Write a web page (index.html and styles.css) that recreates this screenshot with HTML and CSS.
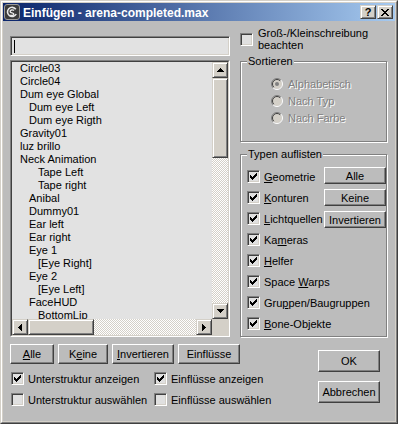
FILE: index.html
```html
<!DOCTYPE html>
<html lang="de">
<head>
  <meta charset="UTF-8">
  <title>Einfügen - arena-completed.max</title>
  <link rel="stylesheet" href="styles.css">
</head>
<body>
  <div class="window">
    <div class="frame">
      <div class="titlebar">
        <svg class="app-icon" width="16" height="16" viewBox="0 0 16 16">
          <rect x="0.5" y="0.5" width="15" height="15" rx="2.5" fill="#3b3b3b" stroke="#9a9a9a"/>
          <path d="M11.8 5.2A4.6 4.6 0 1 0 12.2 10" fill="none" stroke="#e8e8e8" stroke-width="1.6"/>
          <path d="M10 6.6C8.6 5.2 5.8 6 6.2 7.8 6.6 9.4 9.6 8.4 9.8 10.2 10 11.6 7.4 12 6.2 11" fill="none" stroke="#e8e8e8" stroke-width="1.4"/>
        </svg>
        <span class="title">Einfügen - arena-completed.max</span>
        <div class="caption-buttons">
          <span class="cap-btn help">?</span>
          <span class="cap-btn close">
            <svg width="8" height="7" viewBox="0 0 8 7"><path d="M0 0h2v1h1v1h2V1h1V0h2v1H7v1H6v1H5v1h1v1h1v1h1v1H6V6H5V5H3v1H2v1H0V6h1V5h1V4h1V3H2V2H1V1H0z"/></svg>
          </span>
        </div>
      </div>

      <div class="client">
        <div class="main">
          <div class="left">
            <div class="search"><span class="caret"></span></div>
            <div class="listbox">
              <div class="list-inner">
                <div class="list-view">
                  <ul class="items">
                    <li class="l0">Circle03</li>
                    <li class="l0">Circle04</li>
                    <li class="l0">Dum eye Global</li>
                    <li class="l1">Dum eye Left</li>
                    <li class="l1">Dum eye Rigth</li>
                    <li class="l0">Gravity01</li>
                    <li class="l0">luz brillo</li>
                    <li class="l0">Neck Animation</li>
                    <li class="l2">Tape Left</li>
                    <li class="l2">Tape right</li>
                    <li class="l1">Anibal</li>
                    <li class="l1">Dummy01</li>
                    <li class="l1">Ear left</li>
                    <li class="l1">Ear right</li>
                    <li class="l1">Eye 1</li>
                    <li class="l2">[Eye Right]</li>
                    <li class="l1">Eye 2</li>
                    <li class="l2">[Eye Left]</li>
                    <li class="l1">FaceHUD</li>
                    <li class="l2">BottomLip</li>
                  </ul>
                  <div class="vscroll">
                    <span class="sb-btn"><svg width="7" height="4" viewBox="0 0 7 4"><path d="M3 0h1v1h1v1h1v1h1v1H0V3h1V2h1V1h1z"/></svg></span>
                    <span class="sb-thumb v"></span>
                    <span class="sb-track"></span>
                    <span class="sb-btn"><svg width="7" height="4" viewBox="0 0 7 4"><path d="M0 0h7v1H6v1H5v1H4v1H3V3H2V2H1V1H0z"/></svg></span>
                  </div>
                </div>
                <div class="hscroll-row">
                  <div class="hscroll">
                    <span class="sb-btn"><svg width="4" height="7" viewBox="0 0 4 7"><path d="M0 3h1V2h1V1h1V0h1v7H3V6H2V5H1V4H0z"/></svg></span>
                    <span class="sb-thumb h"></span>
                    <span class="sb-track"></span>
                    <span class="sb-btn"><svg width="4" height="7" viewBox="0 0 4 7"><path d="M0 0h1v1h1v1h1v1h1v1H3v1H2v1H1v1H0z"/></svg></span>
                  </div>
                  <span class="sb-corner"></span>
                </div>
              </div>
            </div>
          </div>

          <div class="right">
            <label class="check case">
              <span class="box"></span>
              <span class="case-text">Groß-/Kleinschreibung beachten</span>
            </label>

            <fieldset class="group sort">
              <legend>Sortieren</legend>
              <div class="radio">
                <svg width="12" height="12" viewBox="0 0 12 12"><circle cx="6" cy="6" r="5" fill="#d4d0c8"/><path d="M2.1 9.9A5.5 5.5 0 0 1 9.9 2.1" fill="none" stroke="#808080"/><path d="M9.9 2.1A5.5 5.5 0 0 1 2.1 9.9" fill="none" stroke="#fff"/><path d="M2.8 9.2A4.5 4.5 0 0 1 9.2 2.8" fill="none" stroke="#404040"/><circle cx="6" cy="6" r="2" fill="#808080"/></svg>
                <span>Alphabetisch</span>
              </div>
              <div class="radio">
                <svg width="12" height="12" viewBox="0 0 12 12"><circle cx="6" cy="6" r="5" fill="#d4d0c8"/><path d="M2.1 9.9A5.5 5.5 0 0 1 9.9 2.1" fill="none" stroke="#808080"/><path d="M9.9 2.1A5.5 5.5 0 0 1 2.1 9.9" fill="none" stroke="#fff"/><path d="M2.8 9.2A4.5 4.5 0 0 1 9.2 2.8" fill="none" stroke="#404040"/></svg>
                <span>Nach Typ</span>
              </div>
              <div class="radio">
                <svg width="12" height="12" viewBox="0 0 12 12"><circle cx="6" cy="6" r="5" fill="#d4d0c8"/><path d="M2.1 9.9A5.5 5.5 0 0 1 9.9 2.1" fill="none" stroke="#808080"/><path d="M9.9 2.1A5.5 5.5 0 0 1 2.1 9.9" fill="none" stroke="#fff"/><path d="M2.8 9.2A4.5 4.5 0 0 1 9.2 2.8" fill="none" stroke="#404040"/></svg>
                <span>Nach Farbe</span>
              </div>
            </fieldset>

            <fieldset class="group types">
              <legend>Typen auflisten</legend>
              <div class="types-body">
                <div class="type-list">
                  <label class="check row"><span class="box on"><svg width="7" height="7" viewBox="0 0 7 7"><path d="M0 2h1v3H0zM1 3h1v3H1zM2 4h1v3H2zM3 3h1v3H3zM4 2h1v3H4zM5 1h1v3H5zM6 0h1v3H6z"/></svg></span><span><u>G</u>eometrie</span></label>
                  <label class="check row"><span class="box on"><svg width="7" height="7" viewBox="0 0 7 7"><path d="M0 2h1v3H0zM1 3h1v3H1zM2 4h1v3H2zM3 3h1v3H3zM4 2h1v3H4zM5 1h1v3H5zM6 0h1v3H6z"/></svg></span><span><u>K</u>onturen</span></label>
                  <label class="check row"><span class="box on"><svg width="7" height="7" viewBox="0 0 7 7"><path d="M0 2h1v3H0zM1 3h1v3H1zM2 4h1v3H2zM3 3h1v3H3zM4 2h1v3H4zM5 1h1v3H5zM6 0h1v3H6z"/></svg></span><span><u>L</u>ichtquellen</span></label>
                  <label class="check row"><span class="box on"><svg width="7" height="7" viewBox="0 0 7 7"><path d="M0 2h1v3H0zM1 3h1v3H1zM2 4h1v3H2zM3 3h1v3H3zM4 2h1v3H4zM5 1h1v3H5zM6 0h1v3H6z"/></svg></span><span>Ka<u>m</u>eras</span></label>
                  <label class="check row"><span class="box on"><svg width="7" height="7" viewBox="0 0 7 7"><path d="M0 2h1v3H0zM1 3h1v3H1zM2 4h1v3H2zM3 3h1v3H3zM4 2h1v3H4zM5 1h1v3H5zM6 0h1v3H6z"/></svg></span><span><u>H</u>elfer</span></label>
                  <label class="check row"><span class="box on"><svg width="7" height="7" viewBox="0 0 7 7"><path d="M0 2h1v3H0zM1 3h1v3H1zM2 4h1v3H2zM3 3h1v3H3zM4 2h1v3H4zM5 1h1v3H5zM6 0h1v3H6z"/></svg></span><span>Space <u>W</u>arps</span></label>
                  <label class="check row"><span class="box on"><svg width="7" height="7" viewBox="0 0 7 7"><path d="M0 2h1v3H0zM1 3h1v3H1zM2 4h1v3H2zM3 3h1v3H3zM4 2h1v3H4zM5 1h1v3H5zM6 0h1v3H6z"/></svg></span><span>Gru<u>p</u>pen/Baugruppen</span></label>
                  <label class="check row"><span class="box on"><svg width="7" height="7" viewBox="0 0 7 7"><path d="M0 2h1v3H0zM1 3h1v3H1zM2 4h1v3H2zM3 3h1v3H3zM4 2h1v3H4zM5 1h1v3H5zM6 0h1v3H6z"/></svg></span><span><u>B</u>one-Objekte</span></label>
                </div>
                <div class="type-buttons">
                  <button class="btn small">Alle</button>
                  <button class="btn small">Keine</button>
                  <button class="btn small">Invertieren</button>
                </div>
              </div>
            </fieldset>
          </div>
        </div>

        <div class="bottom">
          <div class="bottom-left">
            <div class="btn-row">
              <button class="btn w44"><u>A</u>lle</button>
              <button class="btn w50">K<u>e</u>ine</button>
              <button class="btn w62"><u>I</u>nvertieren</button>
              <button class="btn w62">Einflüsse</button>
            </div>
            <div class="check-grid">
              <label class="check row"><span class="box on"><svg width="7" height="7" viewBox="0 0 7 7"><path d="M0 2h1v3H0zM1 3h1v3H1zM2 4h1v3H2zM3 3h1v3H3zM4 2h1v3H4zM5 1h1v3H5zM6 0h1v3H6z"/></svg></span><span>Unterstruktur anzeigen</span></label>
              <label class="check row"><span class="box on"><svg width="7" height="7" viewBox="0 0 7 7"><path d="M0 2h1v3H0zM1 3h1v3H1zM2 4h1v3H2zM3 3h1v3H3zM4 2h1v3H4zM5 1h1v3H5zM6 0h1v3H6z"/></svg></span><span>Einflüsse anzeigen</span></label>
              <label class="check row"><span class="box"></span><span>Unterstruktur auswählen</span></label>
              <label class="check row"><span class="box"></span><span>Einflüsse auswählen</span></label>
            </div>
          </div>
          <div class="bottom-right">
            <button class="btn big">OK</button>
            <button class="btn big">Abbrechen</button>
          </div>
        </div>
      </div>
    </div>
  </div>
</body>
</html>
```

FILE: styles.css
```css
* {
  box-sizing: border-box;
}

body {
  margin: 0;
  font-family: 'Liberation Sans', Arial, sans-serif;
  font-size: 11px;
  color: #000;
}

.window {
  width: 398px;
  height: 424px;
  border: 1px solid;
  border-color: #d4d0c8 #404040 #404040 #d4d0c8;
  background: #d4d0c8;
}

.frame {
  height: 100%;
  border: 1px solid;
  border-color: #fff #808080 #808080 #fff;
  padding: 1px;
  display: flex;
  flex-direction: column;
}

/* title bar */
.titlebar {
  height: 18px;
  flex: none;
  display: flex;
  align-items: center;
  background: linear-gradient(to right, #0a246a, #a6caf0);
  padding-left: 1px;
}

.app-icon {
  display: block;
}

.title {
  margin-left: 3px;
  color: #fff;
  font-weight: bold;
  font-size: 12px;
  line-height: 18px;
  padding-top: 1px;
  white-space: nowrap;
}

.caption-buttons {
  margin-left: auto;
  margin-right: 2px;
  display: flex;
  gap: 1px;
}

.cap-btn {
  width: 16px;
  height: 14px;
  display: flex;
  align-items: center;
  justify-content: center;
  background: #d4d0c8;
  border: 1px solid;
  border-color: #d4d0c8 #404040 #404040 #d4d0c8;
  box-shadow: inset 1px 1px #fff, inset -1px -1px #808080;
}

.cap-btn.help {
  font-weight: bold;
  font-size: 11px;
  line-height: 12px;
}

.cap-btn svg {
  display: block;
}

/* client area */
.client {
  flex: 1;
  background: #bcbcbc;
  padding: 6px 8px 0 7px;
  display: flex;
  flex-direction: column;
}

.main {
  display: flex;
  gap: 10px;
}

.left {
  width: 220px;
  flex: none;
  margin-top: 9px;
}

.right {
  width: 147px;
  flex: none;
  min-width: 0;
}

.search {
  height: 20px;
  margin-bottom: 4px;
  background: #e2e2e2;
  border: 1px solid;
  border-color: #808080 #fff #fff #808080;
  box-shadow: inset 1px 1px #404040, inset -1px -1px #d4d0c8;
  display: flex;
  align-items: center;
}

.caret {
  width: 1px;
  height: 13px;
  margin-left: 3px;
  background: #000;
}

/* list box */
.listbox {
  height: 277px;
  border: 1px solid;
  border-color: #808080 #fff #fff #808080;
}

.list-inner {
  height: 100%;
  border: 1px solid;
  border-color: #404040 #d4d0c8 #d4d0c8 #404040;
  background: #e2e2e2;
  display: flex;
  flex-direction: column;
}

.list-view {
  flex: 1;
  min-height: 0;
  display: flex;
  overflow: hidden;
}

.items {
  flex: 1;
  margin: 0;
  padding: 0;
  list-style: none;
  overflow: hidden;
}

.items li {
  height: 13px;
  line-height: 13px;
  white-space: nowrap;
}

.items .l0 { padding-left: 8px; }
.items .l1 { padding-left: 17px; }
.items .l2 { padding-left: 26px; }

.vscroll {
  width: 16px;
  display: flex;
  flex-direction: column;
}

.sb-btn,
.sb-thumb {
  flex: none;
  width: 16px;
  height: 16px;
  display: flex;
  align-items: center;
  justify-content: center;
  background: #d4d0c8;
  border: 1px solid;
  border-color: #d4d0c8 #404040 #404040 #d4d0c8;
  box-shadow: inset 1px 1px #fff, inset -1px -1px #808080;
}

.sb-btn svg {
  display: block;
}

.sb-thumb.v {
  height: 80px;
}

.sb-thumb.h {
  width: 66px;
}

.sb-track {
  flex: 1;
  background-image: repeating-conic-gradient(#d4d0c8 0 25%, #fff 0 50%);
  background-size: 2px 2px;
}

.hscroll-row {
  height: 16px;
  flex: none;
  display: flex;
}

.hscroll {
  flex: 1;
  display: flex;
}

.sb-corner {
  width: 16px;
  background: #d4d0c8;
}

/* check boxes */
.check {
  display: flex;
  align-items: center;
  gap: 4px;
  white-space: nowrap;
}

.box {
  flex: none;
  width: 13px;
  height: 13px;
  border: 1px solid;
  border-color: #808080 #fff #fff #808080;
  box-shadow: inset 1px 1px #404040, inset -1px -1px #d4d0c8;
  background: #e0e0e0;
  display: flex;
  align-items: center;
  justify-content: center;
}

.box svg {
  display: block;
}

.case-text {
  white-space: normal;
  line-height: 12px;
  padding-left: 1px;
}

.check.row {
  height: 21px;
}

/* group boxes */
.group {
  margin: 0;
  padding: 0 0 0 6px;
  border: 1px solid #808080;
  box-shadow: inset 1px 1px #fff, 1px 1px #fff;
  min-inline-size: 0;
}

.group legend {
  padding: 0 1px;
  line-height: 13px;
  background: #bcbcbc;
}

.sort {
  margin-top: 4px;
  padding-top: 7px;
  padding-bottom: 15px;
}

.radio {
  height: 17px;
  display: flex;
  align-items: center;
  gap: 5px;
  margin-left: 24px;
  color: #808080;
  text-shadow: 1px 1px 0 #fff;
}

.radio svg {
  display: block;
  flex: none;
}

.types {
  margin-top: 6px;
  padding-top: 5px;
  padding-bottom: 2px;
}

.types-body {
  display: flex;
  align-items: flex-start;
}

.type-list {
  flex: 1;
  min-width: 0;
}

.type-buttons {
  width: 62px;
  flex: none;
  margin-top: 1px;
  display: flex;
  flex-direction: column;
  gap: 5px;
}

/* push buttons */
.btn {
  margin: 0;
  padding: 0;
  font: inherit;
  color: #000;
  background: #bcbcbc;
  border: 1px solid;
  border-color: #fff #404040 #404040 #fff;
  box-shadow: inset -1px -1px #808080;
  text-align: center;
  white-space: nowrap;
}

.btn.small {
  height: 17px;
  width: 62px;
}

.bottom {
  margin-top: 7px;
  display: flex;
}

.btn-row {
  display: flex;
  gap: 4px;
}

.btn-row .btn {
  height: 20px;
}

.w44 { width: 44px; }
.w50 { width: 50px; }
.w62 { width: 62px; }

.check-grid {
  margin-top: 4px;
  padding-left: 1px;
  display: grid;
  grid-template-columns: 143px auto;
}

.bottom-right {
  margin-left: auto;
  margin-right: 7px;
  margin-top: 6px;
  display: flex;
  flex-direction: column;
  gap: 9px;
}

.btn.big {
  width: 62px;
  height: 22px;
}
```
